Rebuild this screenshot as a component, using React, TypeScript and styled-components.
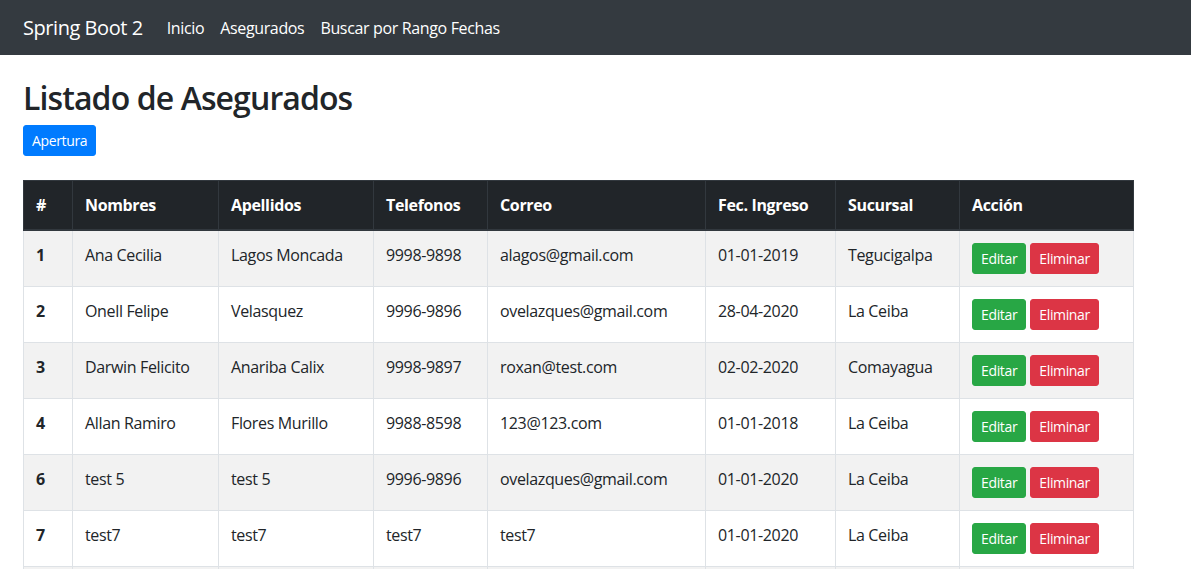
import styled, { createGlobalStyle } from "styled-components";

const GlobalStyle = createGlobalStyle`
  * { box-sizing: border-box; }
  body {
    margin: 0;
    font-family: "Open Sans", "Noto Sans", sans-serif;
    font-size: 16px;
    line-height: 1.5;
    letter-spacing: -0.35px;
    color: #212529;
    background: #fff;
  }
`;

const asegurados = [
  { id: 1, nombres: "Ana Cecilia", apellidos: "Lagos Moncada", telefono: "9998-9898", correo: "alagos@gmail.com", ingreso: "01-01-2019", sucursal: "Tegucigalpa" },
  { id: 2, nombres: "Onell Felipe", apellidos: "Velasquez", telefono: "9996-9896", correo: "ovelazques@gmail.com", ingreso: "28-04-2020", sucursal: "La Ceiba" },
  { id: 3, nombres: "Darwin Felicito", apellidos: "Anariba Calix", telefono: "9998-9897", correo: "roxan@test.com", ingreso: "02-02-2020", sucursal: "Comayagua" },
  { id: 4, nombres: "Allan Ramiro", apellidos: "Flores Murillo", telefono: "9988-8598", correo: "123@123.com", ingreso: "01-01-2018", sucursal: "La Ceiba" },
  { id: 6, nombres: "test 5", apellidos: "test 5", telefono: "9996-9896", correo: "ovelazques@gmail.com", ingreso: "01-01-2020", sucursal: "La Ceiba" },
  { id: 7, nombres: "test7", apellidos: "test7", telefono: "test7", correo: "test7", ingreso: "01-01-2020", sucursal: "La Ceiba" },
  { id: 8, nombres: "test8", apellidos: "test8", telefono: "test8", correo: "test8", ingreso: "01-01-2020", sucursal: "La Ceiba" },
];

const columns = [
  { title: "#", width: 49 },
  { title: "Nombres", width: 146 },
  { title: "Apellidos", width: 155 },
  { title: "Telefonos", width: 114 },
  { title: "Correo", width: 218 },
  { title: "Fec. Ingreso", width: 130 },
  { title: "Sucursal", width: 124 },
  { title: "Acción", width: 174 },
];

export default function App() {
  return (
    <>
      <GlobalStyle />
      <Navbar>
        <NavInner>
          <Brand href="#">Spring Boot 2</Brand>
          <NavLinks>
            <NavLink href="#">Inicio</NavLink>
            <NavLink href="#">Asegurados</NavLink>
            <NavLink href="#">Buscar por Rango Fechas</NavLink>
          </NavLinks>
        </NavInner>
      </Navbar>
      <Container>
        <Title>Listado de Asegurados</Title>
        <Button $color="#007bff">Apertura</Button>
        <Table>
          <colgroup>
            {columns.map((c) => (
              <col key={c.title} style={{ width: c.width }} />
            ))}
          </colgroup>
          <thead>
            <tr>
              {columns.map((c) => (
                <HeadCell key={c.title}>{c.title}</HeadCell>
              ))}
            </tr>
          </thead>
          <tbody>
            {asegurados.map((a, i) => (
              <Row key={a.id} $striped={i % 2 === 0}>
                <Cell $bold>{a.id}</Cell>
                <Cell>{a.nombres}</Cell>
                <Cell>{a.apellidos}</Cell>
                <Cell>{a.telefono}</Cell>
                <Cell>{a.correo}</Cell>
                <Cell>{a.ingreso}</Cell>
                <Cell>{a.sucursal}</Cell>
                <Cell>
                  <Actions>
                    <Button $color="#28a745">Editar</Button>
                    <Button $color="#dc3545">Eliminar</Button>
                  </Actions>
                </Cell>
              </Row>
            ))}
          </tbody>
        </Table>
      </Container>
    </>
  );
}

const Navbar = styled.nav`
  background: #343a40;
  height: 55px;
  display: flex;
  align-items: center;
`;

const NavInner = styled.div`
  display: flex;
  align-items: center;
  padding: 0 23px;
  width: 100%;
`;

const Brand = styled.a`
  color: #fff;
  font-size: 20px;
  letter-spacing: -0.45px;
  text-decoration: none;
  margin-right: 16px;
  line-height: 30px;
`;

const NavLinks = styled.div`
  display: flex;
`;

const NavLink = styled.a`
  color: #fff;
  text-decoration: none;
  padding: 8px;
  font-size: 16px;
`;

const Container = styled.main`
  padding: 24px 23px 0;
`;

const Title = styled.h1`
  font-size: 32px;
  font-weight: 600;
  letter-spacing: -0.9px;
  line-height: 1.2;
  margin: 0 0 8px;
`;

const Button = styled.button<{ $color: string }>`
  background: ${({ $color }) => $color};
  border: 1px solid ${({ $color }) => $color};
  color: #fff;
  font-family: inherit;
  font-size: 14px;
  letter-spacing: -0.35px;
  line-height: 1.5;
  padding: 4px 8px;
  border-radius: 3px;
  cursor: pointer;
`;

const Table = styled.table`
  margin-top: 24px;
  width: 1110px;
  table-layout: fixed;
  border-collapse: collapse;
`;

const HeadCell = styled.th`
  background: #212529;
  color: #fff;
  text-align: left;
  font-weight: 700;
  padding: 12px;
  border: 1px solid #32383e;
  border-bottom-width: 2px;
  vertical-align: bottom;
`;

const Row = styled.tr<{ $striped: boolean }>`
  background: ${({ $striped }) => ($striped ? "#f2f2f2" : "#fff")};
`;

const Cell = styled.td<{ $bold?: boolean }>`
  padding: 12px;
  border: 1px solid #dee2e6;
  vertical-align: top;
  font-weight: ${({ $bold }) => ($bold ? 700 : 400)};
`;

const Actions = styled.div`
  display: flex;
  gap: 4px;
`;
